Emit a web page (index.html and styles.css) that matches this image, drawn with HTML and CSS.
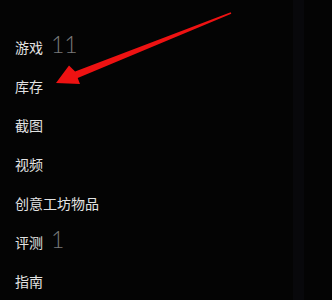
FILE: index.html
```html
<!DOCTYPE html>
<html lang="zh">
<head>
<meta charset="utf-8">
<link rel="stylesheet" href="styles.css">
</head>
<body>
<div class="page">
  <ul class="nav">
    <li class="item"><span class="label">游戏</span><span class="count">11</span></li>
    <li class="item"><span class="label">库存</span></li>
    <li class="item"><span class="label">截图</span></li>
    <li class="item"><span class="label">视频</span></li>
    <li class="item"><span class="label">创意工坊物品</span></li>
    <li class="item"><span class="label">评测</span><span class="count">1</span></li>
    <li class="item"><span class="label">指南</span></li>
  </ul>
  <div class="band"></div>
  <div class="edge"></div>
</div>
<svg class="arrow" width="332" height="300" viewBox="0 0 332 300">
  <polygon points="56,83 80,84 77.7,78 231.3,13.8 230.7,12.2 75.1,71.6 69,65.5" fill="#ee1212"/>
</svg>
</body>
</html>
```
FILE: styles.css
```css
html, body {
  margin: 0;
  padding: 0;
  background: #040404;
}
.page {
  display: flex;
  width: 332px;
  height: 300px;
  overflow: hidden;
}
.nav {
  list-style: none;
  margin: 0;
  padding: 27px 0 0 15px;
  flex: 1;
}
.item {
  height: 39px;
  display: flex;
  align-items: center;
  gap: 8px;
}
.label {
  font-family: "Noto Sans CJK SC", "Liberation Sans", sans-serif;
  font-size: 14px;
  color: #e2e2e2;
  line-height: 1;
}
.count {
  font-family: "Lato", "Liberation Sans", sans-serif;
  font-weight: 300;
  font-size: 23px;
  color: #7a7a7a;
  line-height: 1;
  margin-top: -4px;
}
.band {
  width: 11px;
  background: #08080b;
}
.edge {
  width: 28px;
}
.arrow {
  position: absolute;
  left: 0;
  top: 0;
}
```
